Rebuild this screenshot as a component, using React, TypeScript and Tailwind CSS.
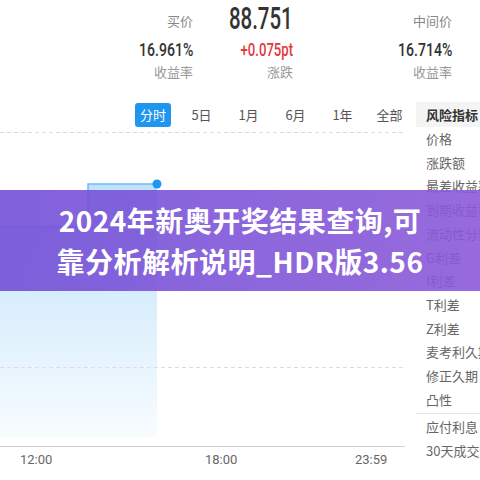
import React from "react";

const tabs = ["分时", "5日", "1月", "6月", "1年", "全部"];

const risks = [
  "价格",
  "涨跌额",
  "最差收益率",
  "到期收益率",
  "流动性分数",
  "G利差",
  "I利差",
  "T利差",
  "Z利差",
  "麦考利久期",
  "修正久期",
  "凸性",
];

const font = { fontFamily: '"Noto Sans CJK SC", "Noto Sans", sans-serif' };

function Num({ children, className }: { children: React.ReactNode; className?: string }) {
  return (
    <span className={"inline-block origin-right font-['Roboto',sans-serif] " + (className ?? "scale-x-[0.74]")}>
      {children}
    </span>
  );
}

function Chart() {
  return (
    <svg width="416" height="320" viewBox="0 0 416 320" className="block">
      <defs>
        <linearGradient id="area" x1="0" y1="0" x2="0" y2="1">
          <stop offset="0%" stopColor="#bfe2fb" />
          <stop offset="100%" stopColor="#f8fcff" />
        </linearGradient>
      </defs>
      <line x1="0" y1="5.5" x2="405" y2="5.5" stroke="#dcdcdc" strokeDasharray="4 3" />
      <path d="M0 100 L88 100 L88 57 L157 57 L157 310 L0 310 Z" fill="url(#area)" />
      <line x1="0" y1="114.5" x2="405" y2="114.5" stroke="#d8d8d8" strokeDasharray="4 3" />
      <line x1="0" y1="240.5" x2="405" y2="240.5" stroke="#dedede" strokeDasharray="4 3" />
      <path d="M0 100 L88 100 L88 57 L157 57" fill="none" stroke="#6dbcf5" strokeWidth="1.5" />
      <circle cx="157" cy="57" r="4.5" fill="#2196f3" />
      <line x1="0" y1="319.5" x2="405" y2="319.5" stroke="#cfcfcf" />
    </svg>
  );
}

export default function App() {
  return (
    <div className="relative w-[480px] h-[480px] overflow-hidden bg-white" style={font}>
      {/* quote header */}
      <div className="flex pt-[2px]">
        <div className="w-[193px] flex flex-col items-end">
          <div className="h-[34px] flex items-center pt-[4px] text-[13px] text-[#888]">买价</div>
          <div className="h-[28px] flex items-center text-[19px] font-medium text-[#333]">
            <Num>16.961%</Num>
          </div>
          <div className="h-[16px] flex items-center text-[13px] text-[#999]">收益率</div>
        </div>
        <div className="w-[100px] flex flex-col items-end">
          <div className="h-[34px] flex items-center text-[31px] font-medium text-[#333]">
            <Num className="scale-x-[0.66]">88.751</Num>
          </div>
          <div className="h-[28px] flex items-center text-[19px] font-medium text-[#e2383d]">
            <Num className="scale-x-[0.69]">+0.075pt</Num>
          </div>
          <div className="h-[16px] flex items-center text-[13px] text-[#999]">涨跌</div>
        </div>
        <div className="w-[159px] flex flex-col items-end">
          <div className="h-[34px] flex items-center pt-[4px] text-[13px] text-[#888]">中间价</div>
          <div className="h-[28px] flex items-center text-[19px] font-medium text-[#333]">
            <Num>16.714%</Num>
          </div>
          <div className="h-[16px] flex items-center text-[13px] text-[#999]">收益率</div>
        </div>
      </div>

      <div className="flex mt-[22px]">
        {/* chart column */}
        <div className="w-[416px]">
          <div className="h-[25px] flex items-center pl-[135px]">
            {tabs.map((t, i) =>
              i === 0 ? (
                <div
                  key={t}
                  className="w-[36px] h-[24px] mr-[7px] rounded-[3px] bg-[#1e96f0] text-white text-[13px] flex items-center justify-center"
                >
                  {t}
                </div>
              ) : (
                <div key={t} className="w-[47px] text-center text-[13px] text-[#555]">
                  {t}
                </div>
              )
            )}
          </div>
          <Chart />
          <div className="h-[24px] text-[13px] text-[#666] font-['Roboto',sans-serif]">
            <div className="flex pl-[20px] pt-[3px]">
              <span className="w-[185px]">12:00</span>
              <span className="w-[150px]">18:00</span>
              <span>23:59</span>
            </div>
          </div>
        </div>

        {/* risk list */}
        <div className="w-[64px] whitespace-nowrap overflow-hidden">
          <div className="h-[25px] bg-[#f4f4f4] pl-[10px] flex items-center text-[13px] font-bold text-[#333]">
            风险指标
          </div>
          {risks.map((r) => (
            <div key={r} className="h-[23.7px] pl-[10px] flex items-center text-[13px] text-[#666]">
              {r}
            </div>
          ))}
          <div className="border-t border-[#e5e5e5] mt-[2px]">
            <div className="h-[24px] pl-[10px] flex items-center text-[13px] text-[#666]">应付利息</div>
            <div className="h-[24px] pl-[10px] flex items-center text-[13px] text-[#666]">30天成交量</div>
          </div>
        </div>
      </div>

      {/* promo banner overlay */}
      <div className="absolute left-0 right-0 top-[190px] h-[101px] bg-gradient-to-r from-[#7350d8]/90 to-[#8b5ad8]/90 flex flex-col items-center justify-center">
        <div className="text-white font-bold text-[28px] leading-[41px] tracking-[0.5px] whitespace-nowrap">
          2024年新奥开奖结果查询,可
        </div>
        <div className="text-white font-bold text-[28px] leading-[41px] tracking-[0.5px] whitespace-nowrap">
          靠分析解析说明_HDR版3.56
        </div>
      </div>
    </div>
  );
}
